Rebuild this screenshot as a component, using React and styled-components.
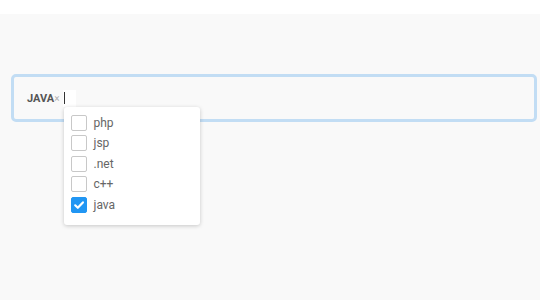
import React, { useState } from "react";
import styled, { createGlobalStyle, css } from "styled-components";

const GlobalStyle = createGlobalStyle`
  html, body {
    margin: 0;
    padding: 0;
    background: #ffffff;
    font-family: Roboto, "Liberation Sans", Arial, sans-serif;
  }
`;

const OPTIONS = ["php", "jsp", ".net", "c++", "java"];

export default function App() {
  const [selected, setSelected] = useState(["java"]);

  const toggle = (opt) => {
    setSelected((prev) =>
      prev.includes(opt) ? prev.filter((o) => o !== opt) : [...prev, opt]
    );
  };

  return (
    <>
      <GlobalStyle />
      <TopBar />
      <Page>
        <SelectBox>
          {selected.map((opt) => (
            <Tag key={opt}>
              <TagLabel>{opt.toUpperCase()}</TagLabel>
              <TagRemove onClick={() => toggle(opt)}>×</TagRemove>
            </Tag>
          ))}
          <InputWrap>
            <Caret />
            <Dropdown>
              {OPTIONS.map((opt) => (
                <Option key={opt} onClick={() => toggle(opt)}>
                  <Checkbox checked={selected.includes(opt)}>
                    {selected.includes(opt) && (
                      <svg width="12" height="12" viewBox="0 0 12 12">
                        <path
                          d="M2.2 6.3 L4.8 8.8 L9.9 3.4"
                          fill="none"
                          stroke="#fff"
                          strokeWidth="2.2"
                          strokeLinecap="round"
                          strokeLinejoin="round"
                        />
                      </svg>
                    )}
                  </Checkbox>
                  <OptionLabel>{opt}</OptionLabel>
                </Option>
              ))}
            </Dropdown>
          </InputWrap>
        </SelectBox>
      </Page>
    </>
  );
}

const TopBar = styled.div`
  height: 14px;
  background: #ffffff;
`;

const Page = styled.div`
  background: #f9f9f9;
  min-height: 286px;
  padding: 60px 3px 0 11px;
  box-sizing: border-box;
`;

const SelectBox = styled.div`
  display: flex;
  align-items: center;
  height: 48px;
  box-sizing: border-box;
  border: 3px solid #c2ddf4;
  border-radius: 5px;
  padding-left: 13px;
  background: #f9f9f9;
`;

const Tag = styled.div`
  display: flex;
  align-items: baseline;
`;

const TagLabel = styled.span`
  font-size: 11px;
  font-weight: 700;
  color: #555;
`;

const TagRemove = styled.span`
  font-size: 10px;
  color: #b0b0b0;
  cursor: pointer;
`;

const InputWrap = styled.div`
  position: relative;
  width: 13px;
  height: 17px;
  margin-left: 3px;
  background: #ffffff;
`;

const Caret = styled.div`
  position: absolute;
  left: 1px;
  top: 2px;
  width: 1px;
  height: 12px;
  background: #333;
`;

const Dropdown = styled.div`
  position: absolute;
  top: 100%;
  left: 1px;
  width: 136px;
  padding: 6px 0 10px;
  background: #ffffff;
  border-radius: 3px;
  box-shadow: 0 1px 4px rgba(0, 0, 0, 0.2);
  z-index: 2;
`;

const Option = styled.div`
  display: flex;
  align-items: center;
  height: 20.5px;
  padding-left: 7px;
  cursor: pointer;
`;

const Checkbox = styled.div`
  width: 16px;
  height: 16px;
  box-sizing: border-box;
  border: 1px solid #c8c8c8;
  border-radius: 2px;
  background: #fff;
  display: flex;
  align-items: center;
  justify-content: center;

  ${({ checked }) =>
    checked &&
    css`
      background: #2196f3;
      border-color: #2196f3;
    `}
`;

const OptionLabel = styled.span`
  margin-left: 7px;
  font-size: 12px;
  color: #666;
`;
